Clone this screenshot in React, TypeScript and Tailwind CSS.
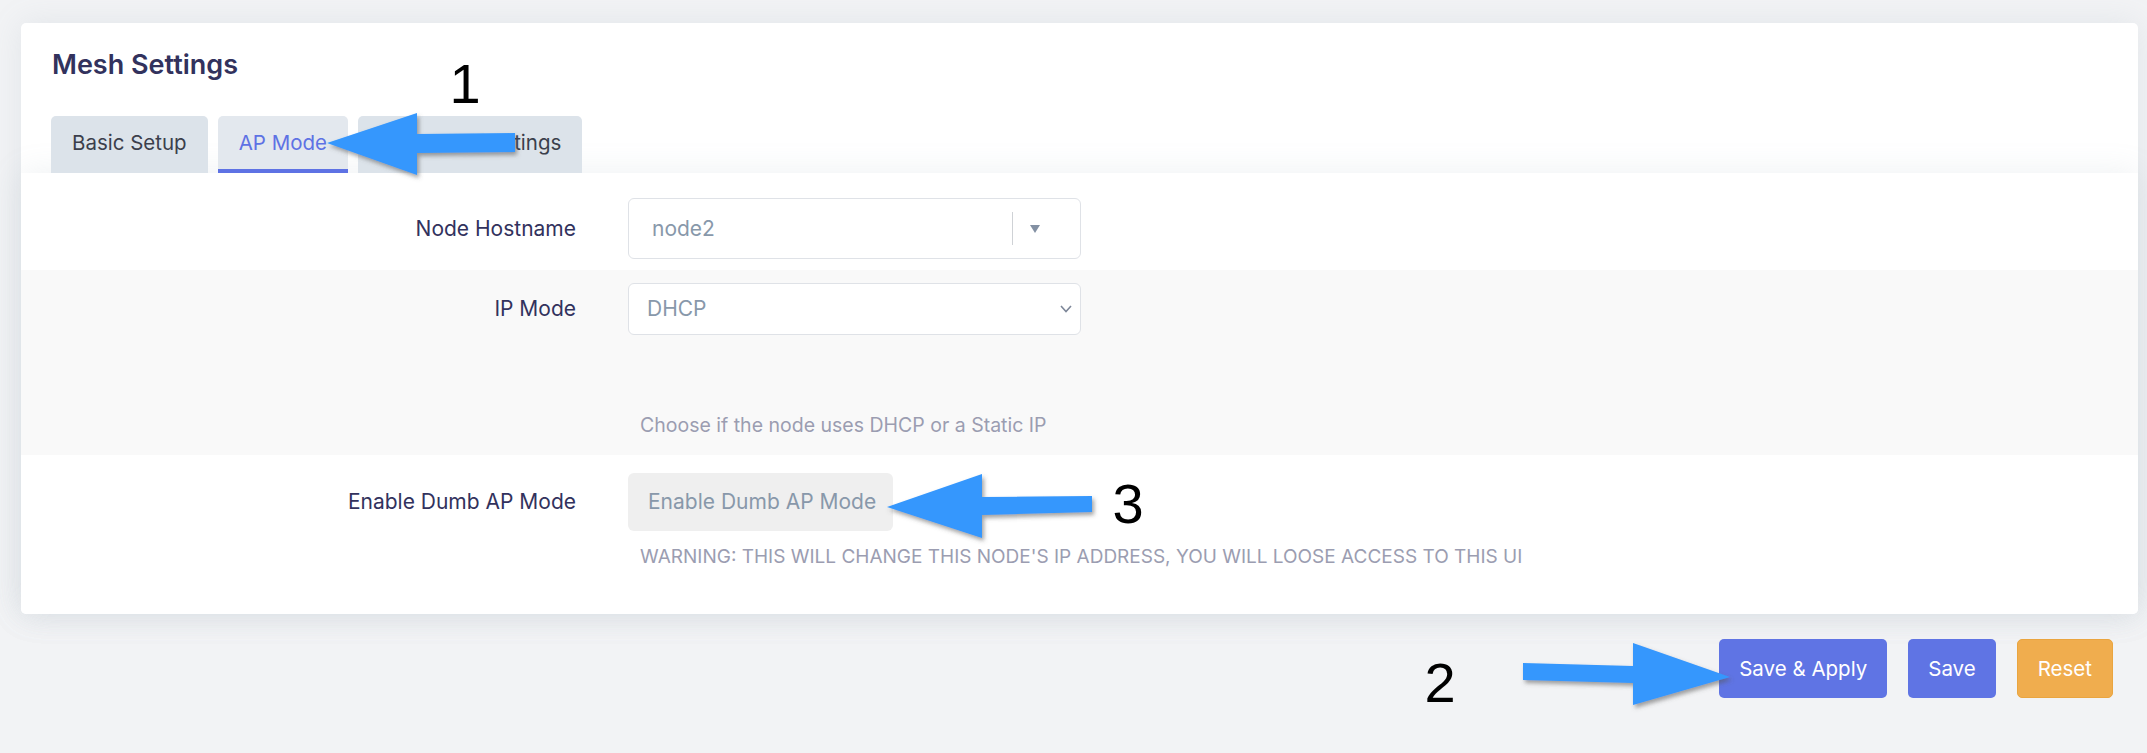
import React from "react";

function Tab({ label, active }: { label: string; active?: boolean }) {
  return (
    <div
      className={
        active
          ? "h-[57px] rounded-t-[5px] bg-[#e3e8ee] px-[21px] pt-[15px] text-[20.5px] leading-[24px] text-[#5e72e4] border-b-[4px] border-[#5e72e4]"
          : "h-[57px] rounded-t-[5px] bg-[#dce3ea] px-[21px] pt-[15px] text-[20.5px] leading-[24px] text-[#3b3f4c]"
      }
    >
      {label}
    </div>
  );
}

function Arrows() {
  return (
    <svg
      className="pointer-events-none absolute left-0 top-0"
      width={2147}
      height={753}
      viewBox="0 0 2147 753"
    >
      <defs>
        <filter id="sh" x="-20%" y="-40%" width="140%" height="180%">
          <feDropShadow dx="2" dy="3" stdDeviation="2" floodColor="#555" floodOpacity="0.55" />
        </filter>
      </defs>
      <polygon
        filter="url(#sh)"
        fill="#3597fd"
        points="327,143 417,113 417,134 515,133 515,152 417,153 417,175"
      />
      <polygon
        filter="url(#sh)"
        fill="#3597fd"
        points="887,507 982,474 982,497 1092,496 1092,512 982,515 982,538"
      />
      <polygon
        filter="url(#sh)"
        fill="#3597fd"
        points="1523,663 1633,666 1633,643 1730,677 1633,705 1633,683 1523,680"
      />
      <text x="465" y="103" fontSize="56" fontFamily="'Liberation Sans', Arial, sans-serif" textAnchor="middle" fill="#000">
        1
      </text>
      <text x="1440" y="702" fontSize="56" fontFamily="'Liberation Sans', Arial, sans-serif" textAnchor="middle" fill="#000">
        2
      </text>
      <text x="1128" y="523" fontSize="56" fontFamily="'Liberation Sans', Arial, sans-serif" textAnchor="middle" fill="#000">
        3
      </text>
    </svg>
  );
}

export default function App() {
  return (
    <div className="relative min-h-[753px] w-full overflow-hidden bg-[#f2f3f5] pl-[21px] pr-[9px] pt-[23px] font-['Inter',sans-serif]">
      <div className="rounded-[5px] bg-white shadow-[0_0_2rem_0_rgba(136,152,170,0.15)]">
        <div className="pt-[25px]">
          <h2 className="pl-[31px] text-[27px] font-semibold leading-[33px] text-[#32325d]">
            Mesh Settings
          </h2>
          <div className="mt-[35px] flex gap-[10px] pl-[30px]">
            <Tab label="Basic Setup" />
            <Tab label="AP Mode" active />
            <Tab label="Advanced Settings" />
          </div>
        </div>
        <div className="rounded-b-[5px] bg-white text-[21px] leading-[24px] shadow-[0_0_2rem_0_rgba(136,152,170,0.15)]">
          {/* Row 1 */}
          <div className="flex pb-[11px] pt-[25px]">
            <div className="flex h-[61px] w-[555px] items-center justify-end text-[#32325d]">
              Node Hostname
            </div>
            <div className="ml-[52px]">
              <div className="flex h-[61px] w-[453px] items-center rounded-[6px] border border-[#dfe2e7] bg-white pl-[23px] pr-[23px]">
                <span className="flex-1 text-[#8898aa]">node2</span>
                <span className="h-[33px] w-px bg-[#cfd2d6]" />
                <span className="flex w-[44px] justify-center">
                  <svg width="10" height="8" viewBox="0 0 10 8">
                    <polygon points="0,0 10,0 5,8" fill="#8390a3" />
                  </svg>
                </span>
              </div>
            </div>
          </div>
          {/* Row 2 */}
          <div className="flex bg-[#f9f9f9] pb-[18px] pt-[13px]">
            <div className="flex h-[52px] w-[555px] items-center justify-end text-[#32325d]">
              IP Mode
            </div>
            <div className="ml-[52px]">
              <div className="flex h-[52px] w-[453px] items-center rounded-[6px] border border-[#dfe2e7] bg-white pl-[18px] pr-[8px]">
                <span className="flex-1 text-[#8898aa]">DHCP</span>
                <svg width="12" height="8" viewBox="0 0 12 8">
                  <polyline points="1,1 6,6.5 11,1" fill="none" stroke="#7d8799" strokeWidth="1.6" />
                </svg>
              </div>
              <div className="mt-[78px] pl-[12px] text-[19.5px] text-[#9b9db1]">
                Choose if the node uses DHCP or a Static IP
              </div>
            </div>
          </div>
          {/* Row 3 */}
          <div className="flex pb-[45px] pt-[18px]">
            <div className="flex h-[58px] w-[555px] items-center justify-end text-[#32325d]">
              Enable Dumb AP Mode
            </div>
            <div className="ml-[52px]">
              <button className="h-[58px] w-[265px] rounded-[6px] bg-[#efefef] pl-[20px] text-left text-[#8898aa]">
                Enable Dumb AP Mode
              </button>
              <div className="mt-[14px] pl-[12px] text-[19px] uppercase text-[#9b9db1]">
                WARNING: THIS WILL CHANGE THIS NODE&apos;S IP ADDRESS, YOU WILL LOOSE ACCESS TO THIS UI
              </div>
            </div>
          </div>
        </div>
      </div>
      <div className="mt-[25px] flex justify-end gap-[21px] pr-[25px] text-[20.5px] leading-[24px] text-white">
        <button className="h-[59px] rounded-[5px] bg-[#5f74e4] px-[20px]">Save &amp; Apply</button>
        <button className="h-[59px] rounded-[5px] bg-[#5f74e4] px-[20px]">Save</button>
        <button className="h-[59px] rounded-[5px] border border-[#eaa53f] bg-[#f0ad4e] px-[20px]">Reset</button>
      </div>
      <Arrows />
    </div>
  );
}
